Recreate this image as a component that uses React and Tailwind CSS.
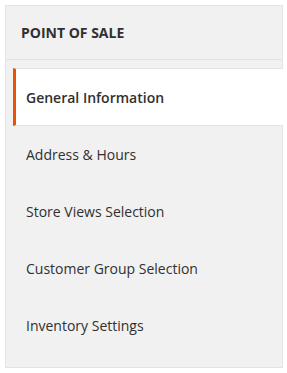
export default function App() {
  const items = ["Address & Hours", "Store Views Selection", "Customer Group Selection", "Inventory Settings"];
  return (
    <div className="w-[287px] h-[373px] bg-white pt-[5px] pl-[5px]" style={{ fontFamily: '"Open Sans", sans-serif' }}>
      <div className="w-[278px] h-[363px] border border-[#e3e3e3] bg-[#f1f1f1] flex flex-col">
        <div className="h-[54px] border-b border-[#e3e3e3] flex items-center pl-[15px] text-[14px] font-bold text-[#303030]">
          POINT OF SALE
        </div>
        <div className="pt-[8px] flex flex-col">
          <div className="ml-[7px] mr-[-1px] h-[58px] bg-white border-y border-[#e3e3e3] border-l-[3px] border-l-[#eb5202] flex items-center pl-[10px] text-[14px] font-semibold text-[#303030]">
            General Information
          </div>
          {items.map((t) => (
            <div key={t} className="h-[57px] flex items-center pl-[20px] text-[14px] text-[#303030]">
              {t}
            </div>
          ))}
        </div>
      </div>
    </div>
  );
}
